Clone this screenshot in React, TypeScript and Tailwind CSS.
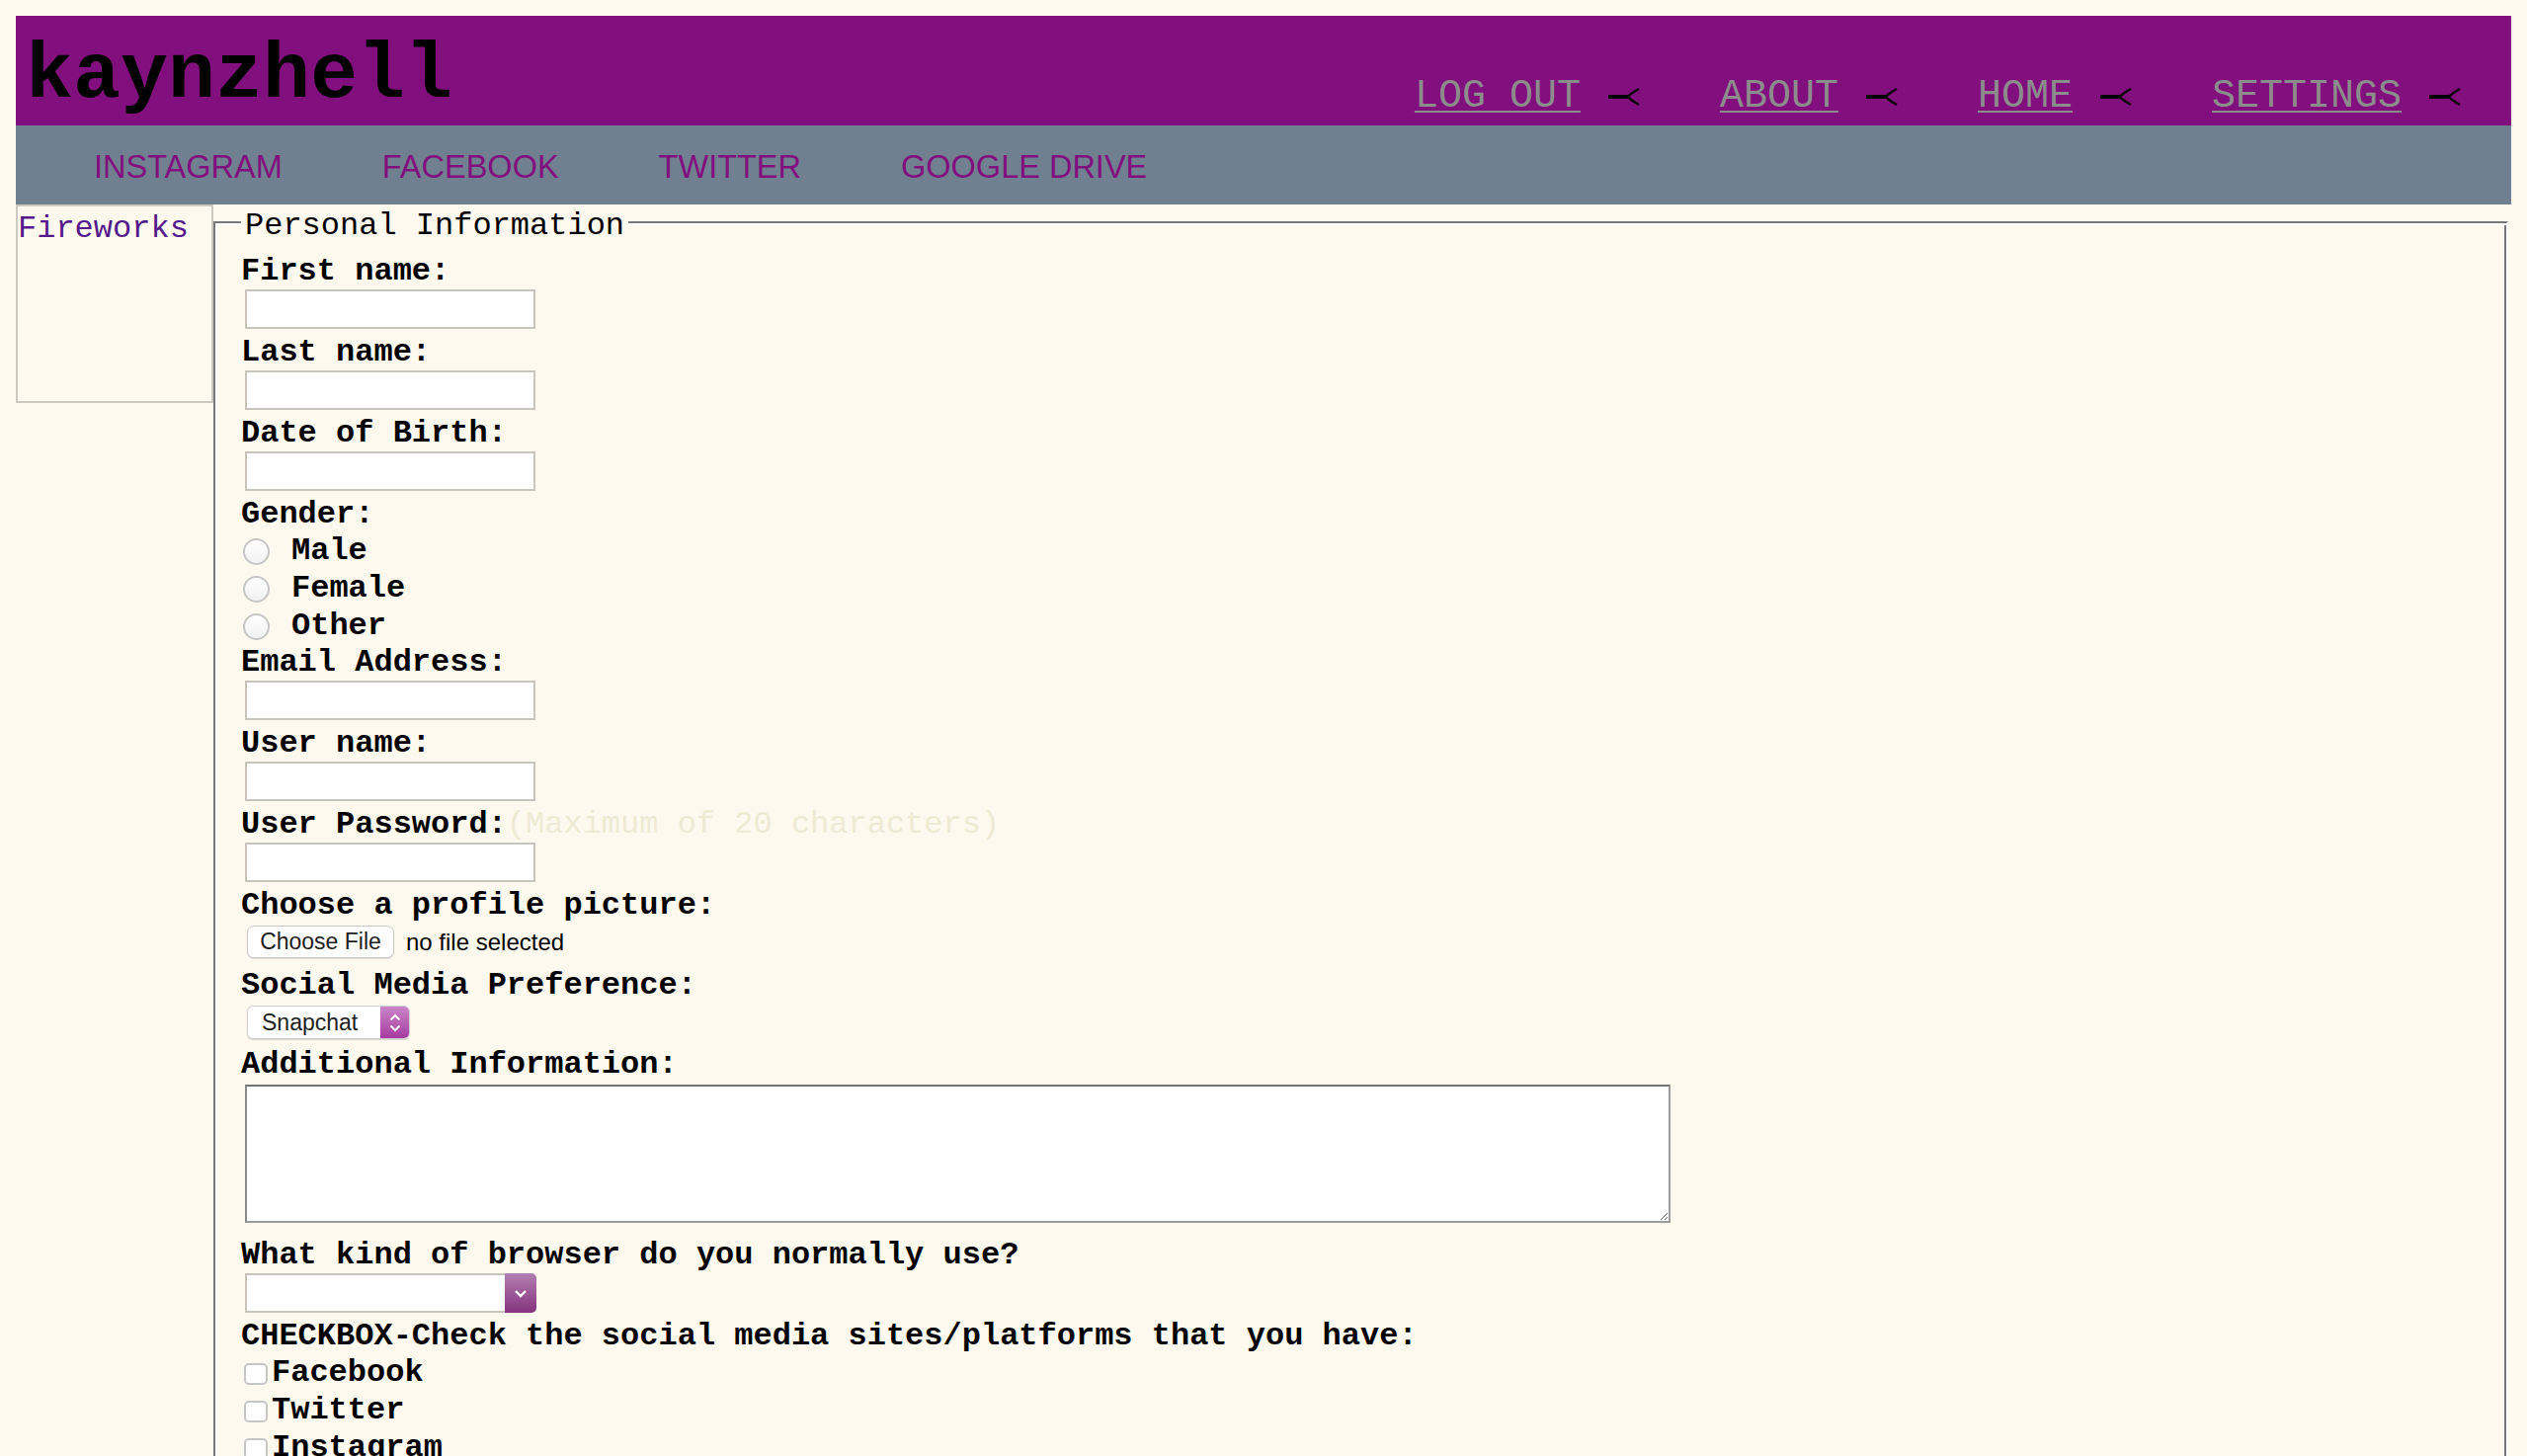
import React from 'react';

const topLinks = ['LOG OUT', 'ABOUT', 'HOME', 'SETTINGS'];
const socialLinks = ['INSTAGRAM', 'FACEBOOK', 'TWITTER', 'GOOGLE DRIVE'];

// the little "arrow tail" mark after each header link
function Tail() {
  return (
    <svg width="32" height="18" viewBox="0 0 32 18" className="ml-[28px] shrink-0">
      <path d="M0 9H21" stroke="#000" strokeWidth="4" />
      <path d="M31 1Q23 5.5 20 9Q23 12.5 31 17" stroke="#000" strokeWidth="2.4" fill="none" />
    </svg>
  );
}

function TextField({ label, hint }: { label: string; hint?: string }) {
  return (
    <>
      <label className="block h-[36px] leading-[40px]">
        {label}
        {hint && <span className="font-normal text-[#eeead4]">{hint}</span>}
      </label>
      <input
        type="text"
        className="mb-[4px] ml-[4px] mt-[2px] block h-[40px] w-[294px] border-2 border-[#c9c5bd] bg-white outline-none"
      />
    </>
  );
}

function Radio({ label }: { label: string }) {
  return (
    <label className="flex h-[38px] items-center">
      <input
        type="radio"
        name="gender"
        className="ml-[2px] mr-[22px] mt-[4px] h-[27px] w-[27px] shrink-0 appearance-none rounded-full border-2 border-[#c6c6c6] bg-linear-to-b from-white to-[#f1f1f1]"
      />
      <span className="mt-[4px]">{label}</span>
    </label>
  );
}

function Check({ label }: { label: string }) {
  return (
    <label className="flex h-[38px] items-center">
      <input
        type="checkbox"
        className="ml-[3px] mr-[4px] mt-[6px] h-[22px] w-[24px] shrink-0 appearance-none rounded-[5px] border-2 border-[#c6c6c6] bg-white"
      />
      <span className="mt-[4px]">{label}</span>
    </label>
  );
}

export default function App() {
  return (
    <div className="min-h-screen bg-[#fdf9ee] px-[16px] pt-[16px] font-['Liberation_Mono','Courier_New',monospace] text-black">
      {/* TOP BANNER */}
      <header className="flex h-[111px] items-start bg-[#820f7e]">
        <h1 className="ml-[10px] mt-[16px] text-[80px] font-bold leading-[90px]">kaynzhell</h1>
        <nav className="mb-[7px] ml-auto flex items-center self-end pr-[51px] text-[40px] leading-[45px]">
          {topLinks.map((l, i) => (
            <div key={l} className={i > 0 ? 'ml-[81px] flex items-center' : 'flex items-center'}>
              <a href="#" className="whitespace-pre text-[#8c8c8c] underline decoration-2 underline-offset-[4px]">
                {l}
              </a>
              <Tail />
            </div>
          ))}
        </nav>
      </header>

      {/* SOCIAL BAR */}
      <nav className="flex h-[80px] items-center gap-[101px] bg-[#708090] pl-[79px] font-['Liberation_Sans',Arial,sans-serif] text-[32.5px] leading-[40px] text-[#820f7e]">
        {socialLinks.map((s) => (
          <a key={s} href="#" className="pt-[3px]">
            {s}
          </a>
        ))}
      </nav>

      <div className="flex items-start">
        <aside className="h-[201px] w-[200px] shrink-0 border-2 border-[#cdc9c0] pt-[5px] text-[32px] leading-[36px]">
          <a href="#" className="text-[#551a8b]">Fireworks</a>
        </aside>

        <fieldset className="mr-[3px] min-w-0 flex-1 border-2 border-b-white border-l-[#787878] border-r-white border-t-[#787878] pb-[14px] pl-[26px] pr-[26px] pt-[12px] shadow-[inset_2px_2px_0_#ffffff,inset_-2px_-2px_0_#787878]">
          <legend className="h-[36px] bg-[#fdf9ee] px-[4px] text-[32px] leading-[43px]">Personal Information</legend>

          <div className="flex flex-col items-start text-[32px] font-bold leading-[36px]">
            <TextField label="First name:" />
            <TextField label="Last name:" />
            <TextField label="Date of Birth:" />

            <div className="h-[36px] leading-[40px]">Gender:</div>
            <Radio label="Male" />
            <Radio label="Female" />
            <Radio label="Other" />

            <TextField label="Email Address:" />
            <TextField label="User name:" />
            <TextField label="User Password:" hint="(Maximum of 20 characters)" />

            <div className="h-[36px] leading-[40px]">Choose a profile picture:</div>
            <div className="mb-[8px] mt-[4px] flex h-[33px] items-center font-['Liberation_Sans',Arial,sans-serif] font-normal">
              <button className="ml-[6px] h-[33px] w-[149px] rounded-[7px] border border-[#c9c9c9] bg-white text-[23px] leading-none text-[#1e1e1e] shadow-[0_1px_1px_rgba(0,0,0,0.12)]">
                Choose File
              </button>
              <span className="ml-[12px] text-[24px] leading-none">no file selected</span>
            </div>

            <div className="h-[36px] leading-[40px]">Social Media Preference:</div>
            <div className="mb-[6px] ml-[6px] mt-[4px] flex h-[34px] w-[165px] overflow-hidden rounded-[6px] border border-[#d0d0d0] bg-white font-['Liberation_Sans',Arial,sans-serif] font-normal shadow-[0_1px_1px_rgba(0,0,0,0.15)]">
              <select className="min-w-0 flex-1 appearance-none bg-transparent pl-[14px] text-[23px] leading-[32px] text-[#1e1e1e] outline-none">
                <option>Snapchat</option>
                <option>Instagram</option>
                <option>Facebook</option>
                <option>Twitter</option>
              </select>
              <span className="flex w-[29px] shrink-0 flex-col items-center justify-center gap-[3px] bg-linear-to-b from-[#c985c8] to-[#a63aa0]">
                <svg width="12" height="8" viewBox="0 0 12 8">
                  <path d="M1.5 6.5L6 2L10.5 6.5" stroke="#fff" strokeWidth="2" fill="none" />
                </svg>
                <svg width="12" height="8" viewBox="0 0 12 8">
                  <path d="M1.5 1.5L6 6L10.5 1.5" stroke="#fff" strokeWidth="2" fill="none" />
                </svg>
              </span>
            </div>

            <div className="h-[36px] leading-[40px]">Additional Information:</div>
            <textarea className="mb-[13px] ml-[4px] mt-[4px] block h-[140px] w-[1443px] border-2 border-b-[#9b9b9b] border-l-[#8a8a8a] border-r-[#9b9b9b] border-t-[#747474] bg-white outline-none" />

            <div className="h-[36px] leading-[40px]">What kind of browser do you normally use?</div>
            <div className="mb-[4px] ml-[4px] mt-[2px] flex h-[40px] w-[295px]">
              <select className="min-w-0 flex-1 appearance-none border-2 border-r-0 border-[#c9c5bd] bg-white outline-none">
                <option></option>
                <option>Chrome</option>
                <option>Firefox</option>
                <option>Safari</option>
              </select>
              <span className="flex w-[32px] shrink-0 items-center justify-center rounded-r-[5px] bg-linear-to-b from-[#b27fb1] to-[#85327f]">
                <svg width="14" height="9" viewBox="0 0 14 9">
                  <path d="M2 2L7 7L12 2" stroke="#fff" strokeWidth="2.4" fill="none" />
                </svg>
              </span>
            </div>

            <div className="h-[36px] leading-[40px]">CHECKBOX-Check the social media sites/platforms that you have:</div>
            <Check label="Facebook" />
            <Check label="Twitter" />
            <Check label="Instagram" />
            <Check label="Snapchat" />
          </div>
        </fieldset>
      </div>
    </div>
  );
}
